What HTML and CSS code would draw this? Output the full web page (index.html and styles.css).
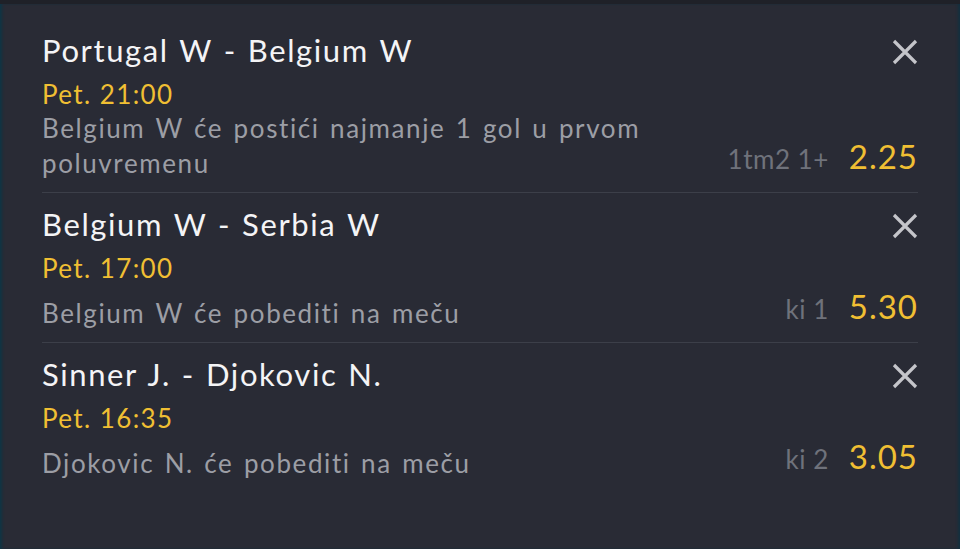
FILE: index.html
```html
<!DOCTYPE html>
<html lang="sr">
<head>
    <meta charset="UTF-8">
    <title>Tiket</title>
    <link rel="stylesheet" href="styles.css">
</head>
<body>
    <div class="slip">
        <div class="bet">
            <div class="bet-head">
                <div class="teams">Portugal W - Belgium W</div>
                <button class="remove" aria-label="Ukloni">
                    <svg viewBox="0 0 26 26" width="26" height="26"><path d="M2 2L24 24M24 2L2 24"/></svg>
                </button>
            </div>
            <div class="time">Pet. 21:00</div>
            <div class="pick">
                <div class="desc">Belgium W će postići najmanje 1 gol u prvom poluvremenu</div>
                <div class="odds-box">
                    <span class="market">1tm2 1+</span>
                    <span class="odds">2.25</span>
                </div>
            </div>
        </div>

        <div class="bet">
            <div class="bet-head">
                <div class="teams">Belgium W - Serbia W</div>
                <button class="remove" aria-label="Ukloni">
                    <svg viewBox="0 0 26 26" width="26" height="26"><path d="M2 2L24 24M24 2L2 24"/></svg>
                </button>
            </div>
            <div class="time">Pet. 17:00</div>
            <div class="pick">
                <div class="desc">Belgium W će pobediti na meču</div>
                <div class="odds-box">
                    <span class="market">ki 1</span>
                    <span class="odds">5.30</span>
                </div>
            </div>
        </div>

        <div class="bet last">
            <div class="bet-head">
                <div class="teams">Sinner J. - Djokovic N.</div>
                <button class="remove" aria-label="Ukloni">
                    <svg viewBox="0 0 26 26" width="26" height="26"><path d="M2 2L24 24M24 2L2 24"/></svg>
                </button>
            </div>
            <div class="time">Pet. 16:35</div>
            <div class="pick">
                <div class="desc">Djokovic N. će pobediti na meču</div>
                <div class="odds-box">
                    <span class="market">ki 2</span>
                    <span class="odds">3.05</span>
                </div>
            </div>
        </div>
    </div>
</body>
</html>
```

FILE: styles.css
```css
* {
    margin: 0;
    padding: 0;
    box-sizing: border-box;
}

html, body {
    height: 100%;
}

body {
    font-family: Lato, "Liberation Sans", sans-serif;
    background: #292b35;
    border-top: 4px solid #1f2128;
    box-shadow: inset 3px 0 3px -1px #0e3545, inset -4px 0 3px -2px #123040;
    overflow: hidden;
}

.slip {
    padding: 15px 42px 0 42px;
}

.bet {
    padding: 4px 0 11px;
    border-bottom: 1px solid #3c3f49;
}

.bet.last {
    border-bottom: none;
}

.bet-head {
    display: flex;
    justify-content: space-between;
    align-items: flex-start;
}

.teams {
    font-size: 31px;
    line-height: 54px;
    letter-spacing: 1.6px;
    word-spacing: 1.5px;
    color: #f4f4f6;
}

.remove {
    background: none;
    border: none;
    width: 26px;
    height: 26px;
    margin-top: 16px;
    cursor: pointer;
}

.remove svg {
    display: block;
    stroke: #c4c5ca;
    stroke-width: 3.2;
    fill: none;
}

.time {
    margin-top: 1px;
    font-size: 26px;
    line-height: 33px;
    letter-spacing: 1.4px;
    color: #f0bf33;
}

.pick {
    display: flex;
    justify-content: space-between;
    align-items: flex-end;
}

.desc {
    max-width: 640px;
    font-size: 26px;
    line-height: 35px;
    letter-spacing: 1.6px;
    word-spacing: 2.2px;
    color: #9c9ea5;
}

.odds-box {
    display: flex;
    align-items: baseline;
    gap: 20px;
    line-height: 43px;
}

.market {
    font-size: 26px;
    letter-spacing: 0.5px;
    color: #6f727b;
}

.odds {
    font-size: 33px;
    letter-spacing: 1px;
    color: #f0bf33;
}
```
